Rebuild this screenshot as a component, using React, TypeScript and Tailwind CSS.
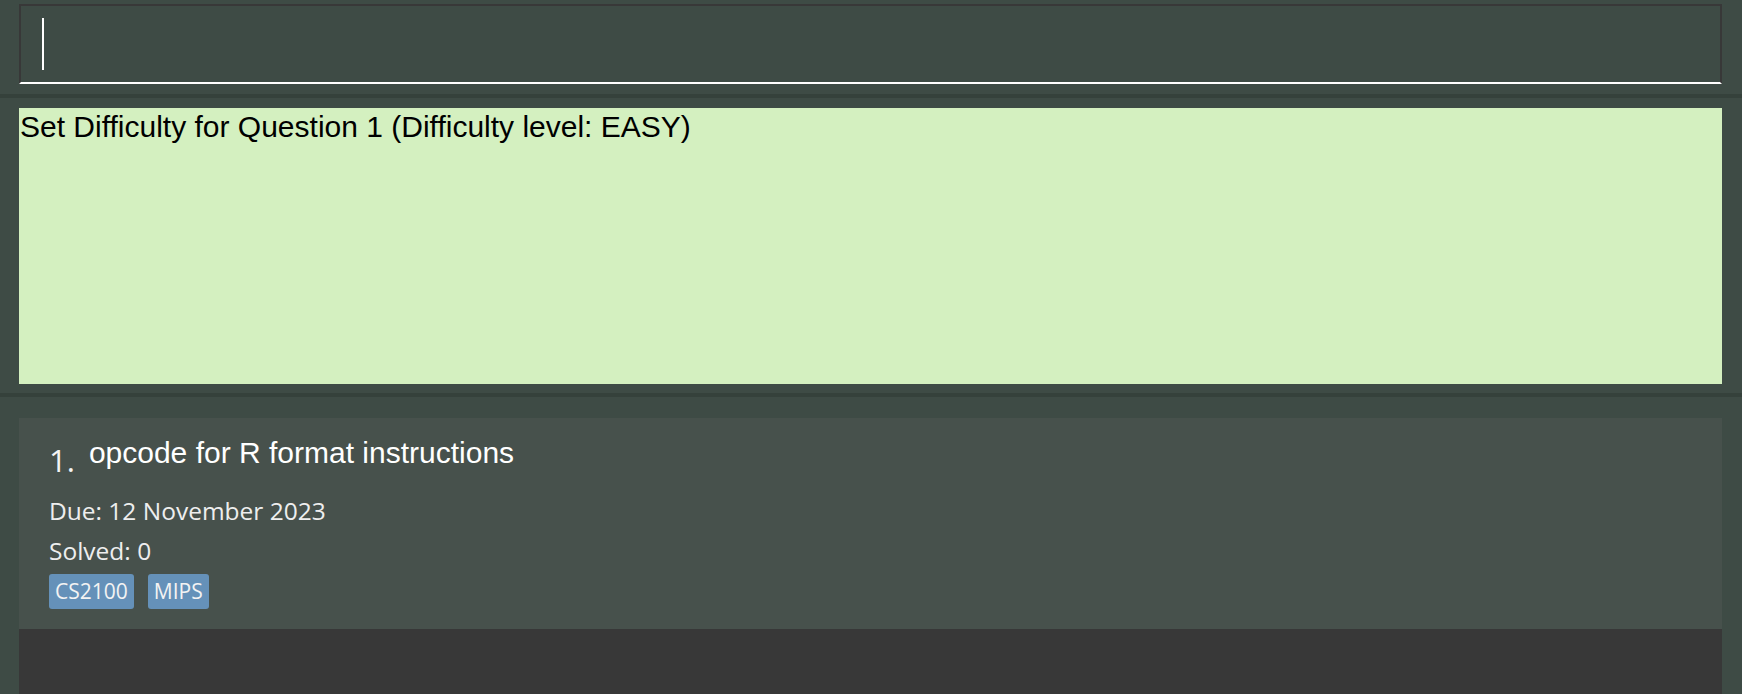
import React from 'react';

const tags = ['CS2100', 'MIPS'];

export default function App() {
  return (
    <div className="h-[694px] w-full overflow-hidden bg-[#3e4b45] flex flex-col">
      {/* Command box */}
      <div className="h-[94px] pt-[4px] pl-[19px] pr-[20px]">
        <div className="h-[80px] border-2 border-[#383838] border-b-white flex items-center pl-[21px]">
          <div className="w-[2px] h-[52px] bg-white" />
        </div>
      </div>
      <div className="h-[4px] bg-[#35413b]" />

      {/* Result display */}
      <div className="h-[295px] pt-[10px] pl-[19px] pr-[20px]">
        <div className="h-[276px] bg-[#d4f0c0] pt-[2px] pl-[1px] text-[30px] leading-[1.15] text-black font-['Liberation_Sans',Arial,sans-serif]">
          Set Difficulty for Question 1 (Difficulty level: EASY)
        </div>
      </div>
      <div className="h-[4px] bg-[#35413b]" />

      {/* Question list */}
      <div className="flex-1 pt-[21px] pl-[19px] pr-[20px] flex flex-col">
        <div className="bg-[#47514c] pt-[20px] pb-[20px] pl-[30px] font-['Open_Sans',sans-serif]">
          <div className="flex items-start">
            <span className="mt-[7px] text-[31px] leading-[31px] text-[#f4f4f4]">1.</span>
            <span className="ml-[14px] text-[30px] leading-[30px] text-white font-['Liberation_Sans',Arial,sans-serif]">
              opcode for R format instructions
            </span>
          </div>
          <div className="mt-[15px] text-[24.5px] leading-[40px] text-[#eeeeee]">Due: 12 November 2023</div>
          <div className="text-[24.5px] leading-[40px] text-[#eeeeee]">Solved: 0</div>
          <div className="mt-[3px] flex gap-[14px]">
            {tags.map((t) => (
              <span
                key={t}
                className="h-[35px] px-[6px] rounded-[3px] bg-[#6591b9] text-[21px] leading-[35px] text-[#f3f3f3]"
              >
                {t}
              </span>
            ))}
          </div>
        </div>
        <div className="flex-1 bg-[#383838]" />
      </div>
    </div>
  );
}
